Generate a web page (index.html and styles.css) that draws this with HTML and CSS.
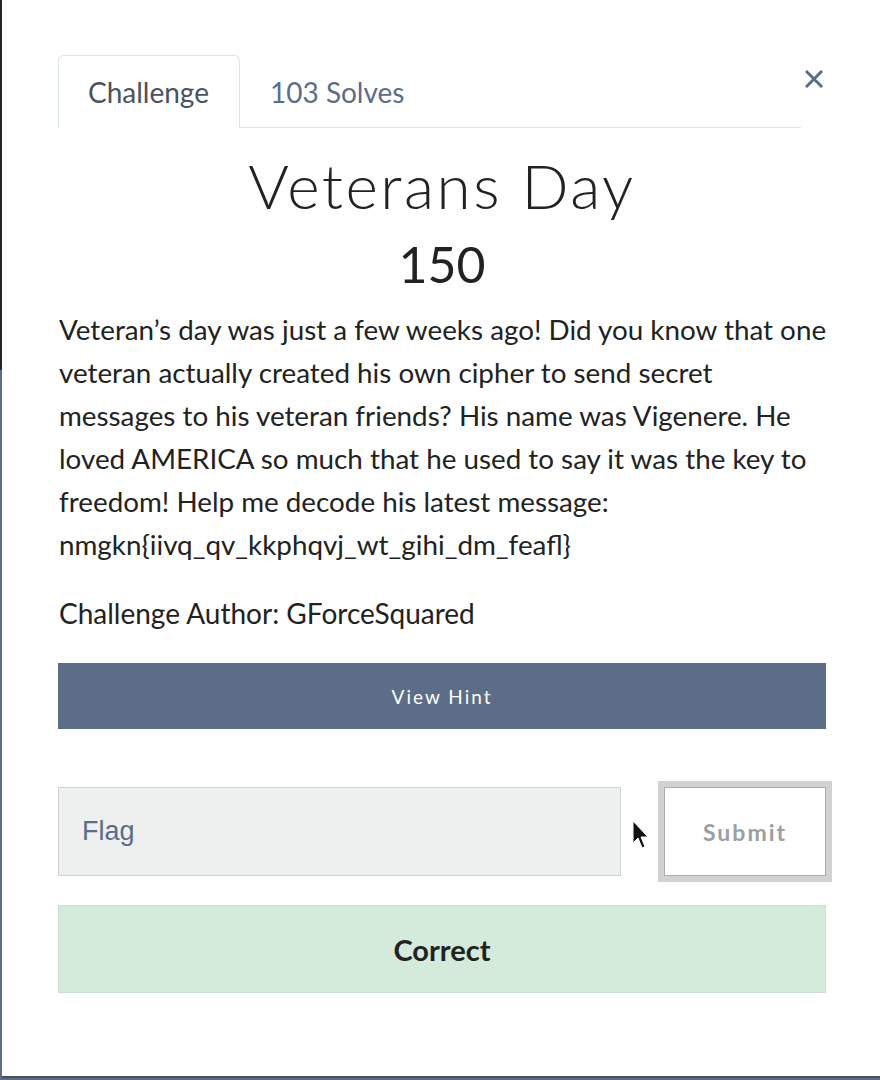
FILE: index.html
```html
<!DOCTYPE html>
<html>
<head>
<meta charset="utf-8">
<link rel="stylesheet" href="styles.css">
</head>
<body>
<div class="modal">
  <div class="header">
    <ul class="tabs">
      <li class="tab active">Challenge</li>
      <li class="tab">103 Solves</li>
    </ul>
    <button class="close" aria-label="Close">
      <svg width="18" height="18" viewBox="0 0 18 18"><path d="M2 2L16 16M16 2L2 16" stroke="#5b6d8a" stroke-width="3" stroke-linecap="square"/></svg>
    </button>
  </div>
  <h1 class="title">Veterans Day</h1>
  <div class="value">150</div>
  <p class="desc">Veteran’s day was just a few weeks ago! Did you know that one veteran actually created his own cipher to send secret messages to his veteran friends? His name was Vigenere. He loved AMERICA so much that he used to say it was the key to freedom! Help me decode his latest message: nmgkn{iivq_qv_kkphqvj_wt_gihi_dm_feafl}</p>
  <p class="author">Challenge Author: GForceSquared</p>
  <button class="hint">View Hint</button>
  <div class="submit-row">
    <div class="flag">Flag</div>
    <svg class="cursor" width="20" height="30" viewBox="0 0 20 30"><path d="M1 1L1 23L6 18L10 28L13 26.5L9 17L16 17Z" fill="#111" stroke="#fff" stroke-width="1"/></svg>
    <button class="submit">Submit</button>
  </div>
  <div class="alert">Correct</div>
</div>
</body>
</html>
```

FILE: styles.css
```css
html, body {
  margin: 0;
  padding: 0;
}
body {
  width: 880px;
  height: 1080px;
  padding-left: 2px;
  box-sizing: border-box;
  background: linear-gradient(#262626 0, #262626 370px, #5b6d8a 370px);
  font-family: "Lato", "Liberation Sans", sans-serif;
  overflow: hidden;
}
.modal {
  background: #fff;
  height: 1078px;
  border-bottom: 2px solid #4b5057;
  padding: 55px 54px 0 56px;
  box-sizing: border-box;
}
.header {
  display: flex;
  align-items: flex-start;
}
.tabs {
  list-style: none;
  margin: 0 4px 0 0;
  padding: 0;
  display: flex;
  flex: 1;
  border-bottom: 1px solid #dbe8df;
}
.tab {
  font-size: 28px;
  line-height: 32px;
  padding: 20px 30px 19px 29px;
  color: #5b6d8a;
  border: 1px solid transparent;
  border-radius: 6px 6px 0 0;
  margin-bottom: -1px;
}
.tab.active {
  color: #4a5260;
  border-color: #dbe8df;
  border-bottom-color: #fff;
}
.close {
  background: none;
  border: none;
  padding: 0;
  margin: 15px 3px 0 0;
  width: 18px;
  height: 18px;
  display: flex;
  align-items: center;
  justify-content: center;
}
.title {
  font-family: "Lato", sans-serif;
  font-weight: 300;
  font-size: 62px;
  letter-spacing: 2.5px;
  line-height: 72px;
  color: #222;
  text-align: center;
  margin: 21px 0 0;
}
.value {
  font-size: 50px;
  line-height: 60px;
  color: #222;
  text-align: center;
  margin-top: 13px;
}
.desc {
  font-size: 27.8px;
  line-height: 43px;
  color: #222;
  margin: 14px -8px 0 1px;
}
.author {
  font-size: 28px;
  line-height: 43px;
  color: #222;
  margin: 26px 0 0 1px;
}
.hint {
  display: block;
  width: 768px;
  height: 66px;
  margin-top: 28px;
  border: none;
  background: #5c6d87;
  color: #fff;
  font-family: "Lato", sans-serif;
  font-size: 19px;
  letter-spacing: 2px;
}
.submit-row {
  display: flex;
  align-items: center;
  margin-top: 58px;
  width: 768px;
}
.flag {
  flex: none;
  width: 563px;
  height: 89px;
  box-sizing: border-box;
  background: #eef0ef;
  border: 1px solid #cfd3d2;
  font-family: "Liberation Sans", Arial, sans-serif;
  font-size: 27px;
  color: #5b6d8a;
  padding-left: 23px;
  display: flex;
  align-items: center;
}
.cursor {
  flex: none;
  margin: 6px 0 0 11px;
}
.submit {
  flex: none;
  margin-left: auto;
  width: 162px;
  height: 89px;
  box-sizing: border-box;
  background: #fff;
  border: 1px solid #a9adac;
  outline: 6px solid #d0d3d2;
  font-family: "Lato", sans-serif;
  font-weight: 700;
  font-size: 23px;
  letter-spacing: 2px;
  color: #9aa09f;
}
.alert {
  margin-top: 29px;
  width: 768px;
  height: 88px;
  box-sizing: border-box;
  background: #d4eadb;
  border: 1px solid #cfded4;
  display: flex;
  align-items: center;
  justify-content: center;
  font-weight: 700;
  font-size: 29px;
  color: #222;
}
```
